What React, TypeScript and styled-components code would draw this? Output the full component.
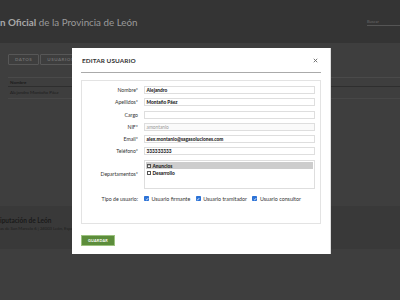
import React from "react";
import styled, { createGlobalStyle } from "styled-components";

const Global = createGlobalStyle`
  html, body { margin: 0; padding: 0; }
  body { background: #3e3e3e; font-family: Lato, "Open Sans", sans-serif; }
  * { box-sizing: border-box; }
`;

const Page = styled.div`
  position: relative;
  width: 400px;
  height: 300px;
  overflow: hidden;
  background: #3e3e3e;
  display: flex;
  flex-direction: column;
`;

const Header = styled.header`
  height: 43px;
  background: #343434;
  display: flex;
  align-items: center;
  justify-content: space-between;
  flex-shrink: 0;
`;

const SiteTitle = styled.div`
  font-size: 9.8px;
  color: #9a9a9a;
  white-space: nowrap;
  b { font-weight: 700; color: #a8a8a8; }
`;

const Search = styled.div`
  width: 33px;
  align-self: flex-start;
  margin-top: 19px;
  border-bottom: 1px solid #555;
  font-size: 4px;
  line-height: 5px;
  color: #6a6a6a;
  padding-bottom: 1px;
`;

const Content = styled.main`
  padding: 11px 0 0 8px;
  height: 163px;
  flex-shrink: 0;
`;

const Tabs = styled.div`
  display: flex;
  gap: 1px;
`;

const Tab = styled.div`
  height: 11px;
  padding: 0 6px;
  border: 1px solid #575757;
  border-radius: 1px;
  color: #6e6e6e;
  font-size: 4.5px;
  font-weight: 700;
  letter-spacing: 0.5px;
  display: flex;
  align-items: center;
`;

const Table = styled.div`
  margin-top: 12px;
  border-top: 1px solid #4a4a4a;
`;

const Row = styled.div<{ $head?: boolean }>`
  height: ${(p) => (p.$head ? 9 : 12)}px;
  display: flex;
  align-items: center;
  padding-left: 2px;
  border-bottom: 1px solid ${(p) => (p.$head ? "#2e2e2e" : "#474747")};
  font-size: 4.5px;
  font-weight: ${(p) => (p.$head ? 700 : 400)};
  color: #1c1c1c;
`;

const Footer = styled.footer`
  height: 43px;
  background: #393939;
  padding-top: 11px;
  flex-shrink: 0;
`;

const FootTitle = styled.div`
  font-size: 6.5px;
  line-height: 8px;
  font-weight: 700;
  color: #1a1a1a;
  white-space: nowrap;
`;

const FootText = styled.div`
  margin-top: 1px;
  font-size: 4.2px;
  line-height: 5px;
  color: #1e1e1e;
  white-space: nowrap;
`;

const Modal = styled.div`
  position: absolute;
  left: 72px;
  top: 48px;
  width: 259px;
  height: 206px;
  background: #fff;
  border-right: 1px solid #ddd;
  padding: 0 9px;
`;

const ModalHead = styled.div`
  height: 25px;
  display: flex;
  align-items: center;
  justify-content: space-between;
  padding: 1px 0 0 1px;
  border-bottom: 1px solid #aaa;
`;

const ModalTitle = styled.h2`
  margin: 0;
  font-size: 6.4px;
  font-weight: 700;
  color: #333;
  letter-spacing: 0.1px;
`;

const Close = styled.span`
  display: flex;
  margin-right: 3px;
`;

const Fieldset = styled.div`
  margin-top: 7px;
  height: 144px;
  border: 1px solid #e3e3e3;
  padding: 5px 5px 0 0;
  display: grid;
  grid-template-columns: 56px 1fr;
  grid-template-rows: repeat(6, 8px) 29px 8px;
  column-gap: 6px;
  row-gap: 4.3px;
  align-items: center;
  align-content: start;
`;

const Label = styled.label<{ $shift?: boolean }>`
  text-align: right;
  font-size: 5.2px;
  line-height: 8px;
  height: 8px;
  color: #333;
  white-space: nowrap;
  margin-top: ${(p) => (p.$shift ? 3 : 0)}px;
`;

const Input = styled.div<{ $disabled?: boolean }>`
  height: 8px;
  border: 1px solid #dedede;
  background: ${(p) => (p.$disabled ? "#fafafa" : "#fff")};
  font-size: 4.8px;
  line-height: 6px;
  font-weight: ${(p) => (p.$disabled ? 400 : 900)};
  color: ${(p) => (p.$disabled ? "#999" : "#1e1e1e")};
  display: flex;
  align-items: center;
  padding-left: 1.5px;
  white-space: nowrap;
`;

const ListBox = styled.div`
  height: 29px;
  border: 1px solid #dedede;
  padding: 1px;
`;

const Option = styled.div<{ $selected?: boolean }>`
  height: 7.5px;
  display: flex;
  align-items: center;
  gap: 1.5px;
  padding-left: 1px;
  background: ${(p) => (p.$selected ? "#cdcdcd" : "transparent")};
  font-size: 4.8px;
  line-height: 6px;
  font-weight: 900;
  color: #1e1e1e;
`;

const Box = styled.span`
  width: 4px;
  height: 4px;
  border: 0.6px solid #555;
  display: inline-flex;
  align-items: center;
  justify-content: center;
  background: #fff;
`;

const Types = styled.div`
  display: flex;
  align-items: center;
  height: 8px;
  margin-top: 3px;
`;

const Check = styled.span`
  width: 5px;
  height: 5px;
  border-radius: 0.8px;
  background: #2b72d6;
  display: inline-flex;
  align-items: center;
  justify-content: center;
  margin-right: 2.5px;
`;

const TypeItem = styled.span`
  display: inline-flex;
  align-items: center;
  font-size: 5.3px;
  line-height: 6px;
  color: #333;
  margin-right: 5.5px;
  white-space: nowrap;
`;

const Save = styled.button`
  margin-top: 11px;
  width: 34px;
  height: 11px;
  background: #5c8d3b;
  border: 1px solid #9cc27f;
  color: #fff;
  font-family: Lato, sans-serif;
  font-size: 3.8px;
  font-weight: 700;
  letter-spacing: 0.2px;
  padding: 0;
  display: flex;
  align-items: center;
  justify-content: center;
`;

const Tick = () => (
  <svg width="4" height="4" viewBox="0 0 10 10">
    <path d="M2 5.5 L4.2 7.6 L8.2 2.6" stroke="#fff" strokeWidth="1.8" fill="none" />
  </svg>
);

const Cross = () => (
  <svg width="3" height="3" viewBox="0 0 10 10">
    <path d="M1 1 L9 9 M9 1 L1 9" stroke="#333" strokeWidth="1.6" />
  </svg>
);

const CloseIcon = () => (
  <svg width="5" height="5" viewBox="0 0 10 10">
    <path d="M1.5 1.5 L8.5 8.5 M8.5 1.5 L1.5 8.5" stroke="#666" strokeWidth="1.8" />
  </svg>
);

export default function App() {
  return (
    <>
      <Global />
      <Page>
        <Header>
          <SiteTitle>
            <b>n Oficial</b> de la Provincia de León
          </SiteTitle>
          <Search>Buscar</Search>
        </Header>
        <Content>
          <Tabs>
            <Tab>DATOS</Tab>
            <Tab>USUARIOS</Tab>
          </Tabs>
          <Table>
            <Row $head>Nombre</Row>
            <Row>Alejandro Montaño Páez</Row>
          </Table>
        </Content>
        <Footer>
          <FootTitle>iputación de León</FootTitle>
          <FootText>as de San Marcelo 6 | 24003 León, España</FootText>
        </Footer>
        <Modal>
          <ModalHead>
            <ModalTitle>EDITAR USUARIO</ModalTitle>
            <Close>
              <CloseIcon />
            </Close>
          </ModalHead>
          <Fieldset>
            <Label>Nombre*</Label>
            <Input>Alejandro</Input>
            <Label>Apellidos*</Label>
            <Input>Montaño Páez</Input>
            <Label>Cargo</Label>
            <Input />
            <Label>NIF*</Label>
            <Input $disabled>amontanio</Input>
            <Label>Email*</Label>
            <Input>alex.montanio@sagasoluciones.com</Input>
            <Label>Teléfono*</Label>
            <Input>333333333</Input>
            <Label>Departamentos*</Label>
            <ListBox>
              <Option $selected>
                <Box>
                  <Cross />
                </Box>
                Anuncios
              </Option>
              <Option>
                <Box />
                Desarrollo
              </Option>
            </ListBox>
            <Label $shift>Tipo de usuario:</Label>
            <Types>
              <TypeItem>
                <Check>
                  <Tick />
                </Check>
                Usuario firmante
              </TypeItem>
              <TypeItem>
                <Check>
                  <Tick />
                </Check>
                Usuario tramitador
              </TypeItem>
              <TypeItem>
                <Check>
                  <Tick />
                </Check>
                Usuario consultor
              </TypeItem>
            </Types>
          </Fieldset>
          <Save>GUARDAR</Save>
        </Modal>
      </Page>
    </>
  );
}
